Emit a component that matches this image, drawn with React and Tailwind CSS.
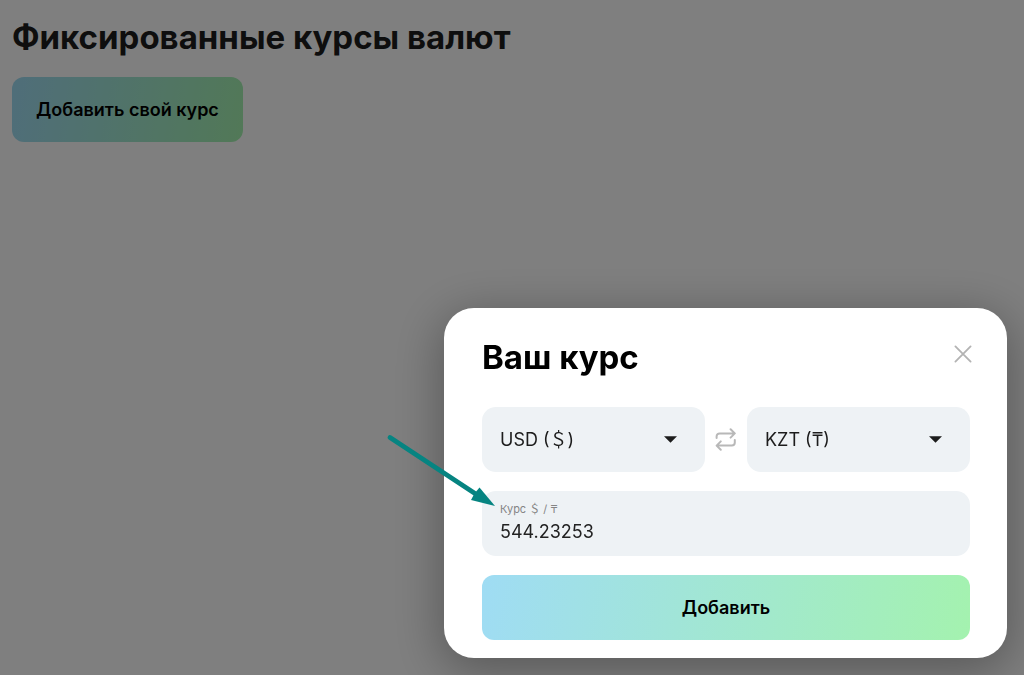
import { useState } from 'react';

const CURRENCIES = [
  { code: 'USD', label: 'USD (＄)', sign: '＄' },
  { code: 'KZT', label: 'KZT (₸)', sign: '₸' },
];

export default function App() {
  const [open, setOpen] = useState(true);

  return (
    <div className="min-h-screen bg-white font-['Inter','Noto_Sans_CJK_SC',sans-serif]">
      <main className="px-3 py-4">
        <h1 className="text-[33px] leading-[42px] font-bold text-[#1c1c1c]">Фиксированные курсы валют</h1>
        <button
          type="button"
          onClick={() => setOpen(true)}
          className="mt-[19px] h-[65px] rounded-xl bg-[linear-gradient(100deg,#9fdcf4,#a4f2af)] px-6 text-lg font-semibold text-black"
        >
          Добавить свой курс
        </button>
      </main>

      {open && <RateDialog onClose={() => setOpen(false)} />}
    </div>
  );
}

function RateDialog({ onClose }) {
  const [from, setFrom] = useState('USD');
  const [to, setTo] = useState('KZT');
  const [rate, setRate] = useState('544.23253');

  const signOf = (code) => CURRENCIES.find((c) => c.code === code).sign;

  const swap = () => {
    setFrom(to);
    setTo(from);
  };

  return (
    <div className="fixed inset-0 flex items-end justify-end bg-black/50 p-[17px]">
      <form
        role="dialog"
        aria-labelledby="rate-title"
        onSubmit={(e) => e.preventDefault()}
        className="w-full max-w-[563px] rounded-[30px] bg-white pr-[37px] pl-[38px] pt-7 pb-[18px] shadow-[0_10px_48px_4px_rgba(0,0,0,0.3)]"
      >
        <div className="flex items-start justify-between">
          <h2 id="rate-title" className="text-[33px] leading-[42px] font-bold text-black">
            Ваш курс
          </h2>
          <button
            type="button"
            aria-label="Закрыть"
            onClick={onClose}
            className="-mr-[11px] flex size-9 items-center justify-center text-[#b3b3b3]"
          >
            <CloseIcon />
          </button>
        </div>

        {/* Currency pair */}
        <div className="mt-[29px] flex items-center gap-[10px]">
          <CurrencySelect label="Из валюты" value={from} onChange={setFrom} />
          <button type="button" aria-label="Поменять местами" onClick={swap} className="shrink-0 text-[#b8b8b8]">
            <SwapIcon />
          </button>
          <CurrencySelect label="В валюту" value={to} onChange={setTo} />
        </div>

        {/* Rate */}
        <div className="relative mt-[19px] flex h-[65px] flex-col justify-center rounded-[14px] bg-[#eef2f5] px-[18px]">
          <label htmlFor="rate" className="text-[11px] leading-4 text-[#858585]">
            Курс {signOf(from)} / {signOf(to)}
          </label>
          <input
            id="rate"
            value={rate}
            onChange={(e) => setRate(e.target.value)}
            className="w-full bg-transparent text-lg leading-[30px] text-[#222] outline-none"
          />
          <PointerArrow />
        </div>

        <button
          type="submit"
          className="mt-[19px] h-[65px] w-full rounded-xl bg-[linear-gradient(100deg,#9fdcf4,#a4f2af)] text-lg font-semibold text-black"
        >
          Добавить
        </button>
      </form>
    </div>
  );
}

function CurrencySelect({ label, value, onChange }) {
  return (
    <div className="relative min-w-0 flex-1">
      <select
        aria-label={label}
        value={value}
        onChange={(e) => onChange(e.target.value)}
        className="block h-[65px] w-full appearance-none rounded-[14px] bg-[#eef2f5] px-[18px] text-lg text-[#1c1c1c] outline-none"
      >
        {CURRENCIES.map((c) => (
          <option key={c.code} value={c.code}>
            {c.label}
          </option>
        ))}
      </select>
      <svg
        className="pointer-events-none absolute inset-y-0 right-7 my-auto"
        width="13"
        height="7"
        viewBox="0 0 13 7"
        fill="#1c1c1c"
      >
        <path d="M0 0.3h13L6.5 6.8z" />
      </svg>
    </div>
  );
}

function CloseIcon() {
  return (
    <svg width="18" height="18" viewBox="0 0 18 18" fill="none" stroke="currentColor" strokeWidth="1.8" strokeLinecap="round">
      <path d="M1.4 1.4 16.6 16.6M16.6 1.4 1.4 16.6" />
    </svg>
  );
}

function SwapIcon() {
  return (
    <svg
      width="22"
      height="24"
      viewBox="0 0 22 24"
      fill="none"
      stroke="currentColor"
      strokeWidth="2"
      strokeLinecap="round"
      strokeLinejoin="round"
    >
      <path d="M1.6 10V8.4a3 3 0 0 1 3-3h15M15.6 1.2l4.2 4.2L15.6 9.6" />
      <path d="M19.8 12v2.6a3 3 0 0 1-3 3H2M5.8 13.4l-4.2 4.2 4.2 4.2" />
    </svg>
  );
}

// Callout arrow that points at the rate field
function PointerArrow() {
  return (
    <svg
      className="pointer-events-none absolute -top-[61px] -left-[98px]"
      width="116"
      height="80"
      viewBox="0 0 116 80"
      aria-hidden="true"
    >
      <path d="M6 7.5 91 63.5" stroke="#068481" strokeWidth="4.8" strokeLinecap="round" />
      <path d="M111 76 87 70 90.5 63.5 95.5 57.5z" fill="#068481" />
    </svg>
  );
}
